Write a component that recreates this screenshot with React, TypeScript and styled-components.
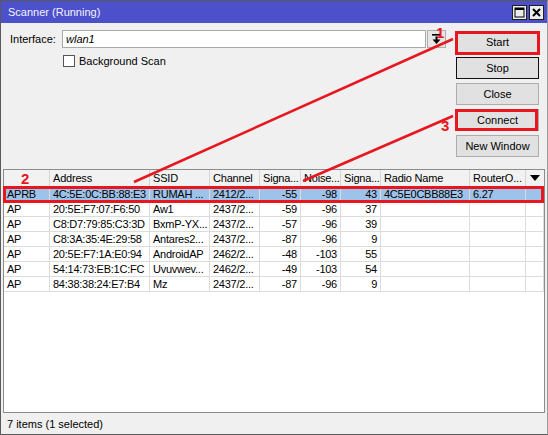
import React from "react";
import styled, { createGlobalStyle } from "styled-components";

const Global = createGlobalStyle`
  html, body { margin: 0; padding: 0; background: #f0f0f0; }
  body { font-family: "Liberation Sans", Arial, sans-serif; font-size: 11px; color: #000; }
  * { box-sizing: border-box; }
`;

const Window = styled.div`
  position: relative;
  width: 548px;
  height: 435px;
  border: 1px solid #5a5a5a;
  border-right-color: #9a9a9a;
  background: #f0f0f0;
  display: flex;
  flex-direction: column;
  overflow: hidden;
`;

const TitleBar = styled.div`
  height: 22px;
  background: #4c50ca;
  display: flex;
  align-items: center;
  padding: 0 3px 0 7px;
  color: #f4f4ff;
  font-size: 11px;
`;

const TitleText = styled.div`
  flex: 1;
`;

const TitleButtons = styled.div`
  display: flex;
  gap: 2px;
`;

const TitleButton = styled.div`
  width: 15px;
  height: 15px;
  border: 1px solid #1e1e1e;
  background: #ececec;
  display: flex;
  align-items: center;
  justify-content: center;
`;

const Top = styled.div`
  display: grid;
  grid-template-columns: 1fr 83px;
  column-gap: 10px;
  padding: 0 8px 0 9px;
  height: 146px;
`;

const Form = styled.div`
  padding-top: 7px;
  display: flex;
  flex-direction: column;
  gap: 7px;
`;

const FieldRow = styled.div`
  display: flex;
  align-items: center;
`;

const Label = styled.div`
  width: 52px;
`;

const Input = styled.div`
  flex: 1;
  height: 18px;
  background: #fff;
  border: 1px solid #a9a9a9;
  font-style: italic;
  padding-left: 3px;
  display: flex;
  align-items: center;
`;

const DropButton = styled.div`
  width: 19px;
  height: 18px;
  margin-left: 1px;
  background: #e6e6e6;
  border: 1px solid #adadad;
  display: flex;
  align-items: center;
  justify-content: center;
`;

const CheckRow = styled.div`
  display: flex;
  align-items: center;
  gap: 4px;
  padding-left: 53px;
`;

const CheckBox = styled.div`
  width: 12px;
  height: 12px;
  background: #fff;
  border: 1px solid #555;
`;

const ButtonColumn = styled.div`
  padding-top: 8px;
  display: flex;
  flex-direction: column;
  gap: 4px;
`;

const Button = styled.div<{ $default?: boolean }>`
  height: 22px;
  width: 83px;
  background: #e1e1e1;
  border: 1px solid ${(p) => (p.$default ? "#111" : "#adadad")};
  display: flex;
  align-items: center;
  justify-content: center;
`;

const TableWrap = styled.div`
  margin: 0 2px 0 2px;
  flex: 1;
  background: #fff;
  border: 1px solid #8c8c8c;
  display: flex;
  flex-direction: column;
`;

const cols = "46px 100px 60px 50px 41px 40px 40px 89px 56px 1fr";

const HeaderRow = styled.div`
  display: grid;
  grid-template-columns: ${cols};
  height: 17px;
  background: #f2f2f2;
  border-bottom: 1px solid #d5d5d5;
`;

const HeaderCell = styled.div<{ $menu?: boolean }>`
  border-right: ${(p) => (p.$menu ? "none" : "1px solid #d5d5d5")};
  padding: 0 3px;
  display: flex;
  align-items: center;
  justify-content: ${(p) => (p.$menu ? "center" : "flex-start")};
  white-space: nowrap;
  overflow: hidden;
  letter-spacing: -0.2px;
`;

const Row = styled.div<{ $selected?: boolean }>`
  display: grid;
  grid-template-columns: ${cols};
  height: 15px;
  background: ${(p) => (p.$selected ? "#9ec3ea" : "#fff")};
  border-bottom: 1px solid #dcdcdc;
`;

const Cell = styled.div<{ $num?: boolean }>`
  border-right: 1px solid #dcdcdc;
  padding: 0 3px;
  display: flex;
  align-items: center;
  justify-content: ${(p) => (p.$num ? "flex-end" : "flex-start")};
  white-space: nowrap;
  overflow: hidden;
  letter-spacing: -0.25px;
`;

const StatusBar = styled.div`
  height: 21px;
  display: flex;
  align-items: center;
  padding-left: 6px;
`;

const Overlay = styled.svg`
  position: absolute;
  left: -1px;
  top: -1px;
  pointer-events: none;
`;

const rows = [
  ["APRB", "4C:5E:0C:BB:88:E3", "RUMAH ...", "2412/2...", "-55", "-98", "43", "4C5E0CBB88E3", "6.27"],
  ["AP", "20:5E:F7:07:F6:50", "Aw1", "2437/2...", "-59", "-96", "37", "", ""],
  ["AP", "C8:D7:79:85:C3:3D", "BxmP-YX...", "2437/2...", "-57", "-96", "39", "", ""],
  ["AP", "C8:3A:35:4E:29:58", "Antares2...", "2437/2...", "-87", "-96", "9", "", ""],
  ["AP", "20:5E:F7:1A:E0:94", "AndroidAP", "2462/2...", "-48", "-103", "55", "", ""],
  ["AP", "54:14:73:EB:1C:FC", "Uvuvwev...", "2462/2...", "-49", "-103", "54", "", ""],
  ["AP", "84:38:38:24:E7:B4", "Mz", "2437/2...", "-87", "-96", "9", "", ""],
];

const headers = ["", "Address", "SSID", "Channel", "Signa...", "Noise...", "Signa...", "Radio Name", "RouterO..."];

export default function App() {
  return (
    <>
      <Global />
      <Window>
        <TitleBar>
          <TitleText>Scanner (Running)</TitleText>
          <TitleButtons>
            <TitleButton>
              <svg width="11" height="11" viewBox="0 0 11 11">
                <rect x="1" y="1" width="9" height="9" fill="none" stroke="#000" strokeWidth="1" />
                <rect x="1" y="1" width="9" height="2" fill="#000" />
              </svg>
            </TitleButton>
            <TitleButton>
              <svg width="11" height="11" viewBox="0 0 11 11">
                <path d="M2 2 L9 9 M9 2 L2 9" stroke="#000" strokeWidth="2" />
              </svg>
            </TitleButton>
          </TitleButtons>
        </TitleBar>
        <Top>
          <Form>
            <FieldRow>
              <Label>Interface:</Label>
              <Input>wlan1</Input>
              <DropButton>
                <svg width="9" height="11" viewBox="0 0 9 11">
                  <rect x="0" y="0" width="9" height="1.6" fill="#000" />
                  <rect x="3.5" y="2.5" width="2" height="4" fill="#000" />
                  <path d="M0.5 5.5 L8.5 5.5 L4.5 10 Z" fill="#000" />
                </svg>
              </DropButton>
            </FieldRow>
            <CheckRow>
              <CheckBox />
              <span>Background Scan</span>
            </CheckRow>
          </Form>
          <ButtonColumn>
            <Button>Start</Button>
            <Button $default>Stop</Button>
            <Button>Close</Button>
            <Button>Connect</Button>
            <Button>New Window</Button>
          </ButtonColumn>
        </Top>
        <TableWrap>
          <HeaderRow>
            {headers.map((h, i) => (
              <HeaderCell key={i}>{h}</HeaderCell>
            ))}
            <HeaderCell $menu>
              <svg width="10" height="6" viewBox="0 0 10 6">
                <path d="M0 0 L10 0 L5 6 Z" fill="#000" />
              </svg>
            </HeaderCell>
          </HeaderRow>
          {rows.map((r, i) => (
            <Row key={i} $selected={i === 0}>
              {r.map((c, j) => (
                <Cell key={j} $num={j >= 4 && j <= 6}>
                  {c}
                </Cell>
              ))}
              <Cell />
            </Row>
          ))}
        </TableWrap>
        <StatusBar>7 items (1 selected)</StatusBar>
        <Overlay width="548" height="435" viewBox="0 0 548 435">
          <g stroke="#e8161e" fill="none">
            <rect x="456.5" y="32.5" width="82" height="21" strokeWidth="3" />
            <rect x="456.5" y="110.5" width="80" height="19" strokeWidth="3" />
            <rect x="4.5" y="187.5" width="538" height="14" strokeWidth="3" />
            <line x1="453" y1="39" x2="134" y2="182" strokeWidth="2.5" />
            <line x1="453" y1="116" x2="303" y2="181" strokeWidth="2.5" />
          </g>
          <g fill="#e8161e" fontFamily="Liberation Sans, Arial, sans-serif" fontWeight="bold" fontSize="15">
            <text x="436" y="38">1</text>
            <text x="21" y="184">2</text>
            <text x="441" y="131">3</text>
          </g>
        </Overlay>
      </Window>
    </>
  );
}
